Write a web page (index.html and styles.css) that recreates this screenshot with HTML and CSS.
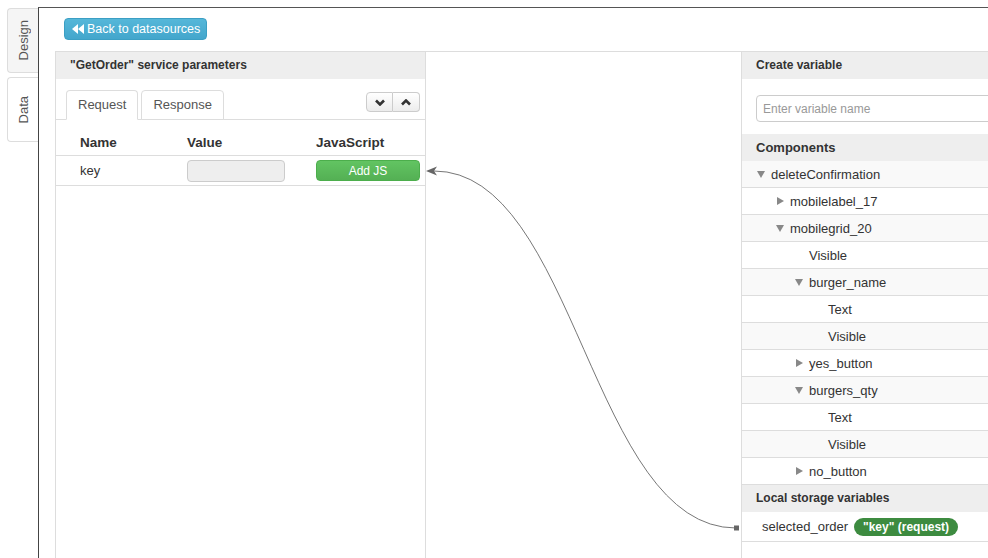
FILE: index.html
```html
<!DOCTYPE html>
<html lang="en">

<head>
    <meta charset="UTF-8">
    <title>Datasource mapping</title>
    <link rel="stylesheet" href="styles.css">
</head>

<body>
    <div class="app">
        <div class="side-tabs">
            <a href="#" class="side-tab">
                <span>Design</span>
            </a>
            <a href="#" class="side-tab active">
                <span>Data</span>
            </a>
        </div>

        <div class="workspace">
            <div class="toolbar">
                <button class="btn-back">
                    <svg width="12" height="10" viewBox="0 0 12 10">
                        <polygon points="6,0 0,5 6,10" fill="#fff" />
                        <polygon points="12,0 6,5 12,10" fill="#fff" />
                    </svg>
                    Back to datasources
                </button>
            </div>

            <div class="panels">
                <!-- service parameters -->
                <div class="panel params">
                    <div class="panel-header">"GetOrder" service parameters</div>
                    <div class="tabs-bar">
                        <a href="#" class="tab active">Request</a>
                        <a href="#" class="tab">Response</a>
                        <div class="btn-group">
                            <button class="btn-small">
                                <svg width="10" height="7" viewBox="0 0 10 7">
                                    <polyline points="1,1.5 5,5.5 9,1.5" fill="none" stroke="#333" stroke-width="2.6" />
                                </svg>
                            </button>
                            <button class="btn-small">
                                <svg width="10" height="7" viewBox="0 0 10 7">
                                    <polyline points="1,5.5 5,1.5 9,5.5" fill="none" stroke="#333" stroke-width="2.6" />
                                </svg>
                            </button>
                        </div>
                    </div>
                    <div class="param-row param-head">
                        <span>Name</span>
                        <span>Value</span>
                        <span>JavaScript</span>
                    </div>
                    <div class="param-row">
                        <span>key</span>
                        <span><input type="text" class="value-input" disabled></span>
                        <span><button class="btn-add">Add JS</button></span>
                    </div>
                </div>

                <!-- connection lines -->
                <div class="canvas">
                    <svg class="links" width="315" height="506">
                        <path d="M8 119 C 150 119, 165 476, 310 476" fill="none" stroke="#777" stroke-width="1" />
                        <polygon points="0,119 11,114.5 8,119 11,123.5" fill="#666" />
                        <rect x="308" y="473.5" width="5" height="5" fill="#666" />
                    </svg>
                </div>

                <!-- variables -->
                <div class="panel vars">
                    <div class="panel-header">Create variable</div>
                    <div class="var-form">
                        <input type="text" class="var-input" placeholder="Enter variable name">
                    </div>
                    <div class="panel-header big">Components</div>
                    <div class="tree">
                        <div class="tree-row lvl-0"><i class="caret down"></i>deleteConfirmation</div>
                        <div class="tree-row lvl-1"><i class="caret right"></i>mobilelabel_17</div>
                        <div class="tree-row lvl-1"><i class="caret down"></i>mobilegrid_20</div>
                        <div class="tree-row lvl-2"><i class="caret"></i>Visible</div>
                        <div class="tree-row lvl-2"><i class="caret down"></i>burger_name</div>
                        <div class="tree-row lvl-3"><i class="caret"></i>Text</div>
                        <div class="tree-row lvl-3"><i class="caret"></i>Visible</div>
                        <div class="tree-row lvl-2"><i class="caret right"></i>yes_button</div>
                        <div class="tree-row lvl-2"><i class="caret down"></i>burgers_qty</div>
                        <div class="tree-row lvl-3"><i class="caret"></i>Text</div>
                        <div class="tree-row lvl-3"><i class="caret"></i>Visible</div>
                        <div class="tree-row lvl-2"><i class="caret right"></i>no_button</div>
                    </div>
                    <div class="panel-header">Local storage variables</div>
                    <div class="storage-row">
                        <span>selected_order</span>
                        <span class="badge">"key" (request)</span>
                    </div>
                </div>
            </div>
        </div>
    </div>
</body>

</html>
```

FILE: styles.css
```css
/* General reset */

* {
    margin: 0;
    padding: 0;
    box-sizing: border-box;
}

body {
    font-family: "Liberation Sans", Arial, sans-serif;
    font-size: 13px;
    color: #333;
    background-color: #fff;
    overflow: hidden;
}

.app {
    display: flex;
    height: 558px;
}

/* vertical tabs on the left */

.side-tabs {
    width: 38px;
    flex: 0 0 38px;
    padding-top: 8px;
    padding-left: 7px;
}

.side-tab {
    display: flex;
    align-items: center;
    justify-content: center;
    width: 31px;
    height: 65px;
    margin-bottom: 4px;
    border: 1px solid #ddd;
    border-right: none;
    border-radius: 4px 0 0 4px;
    background-color: #f5f5f5;
    color: #555;
    font-size: 13px;
    text-decoration: none;
}

.side-tab.active {
    background-color: #fff;
}

.side-tab span {
    writing-mode: vertical-rl;
    transform: rotate(180deg);
}

/* main area */

.workspace {
    flex: 1;
    display: flex;
    flex-direction: column;
    margin-top: 7px;
    border-top: 1px solid #555;
    border-left: 1px solid #444;
    padding-left: 16px;
    overflow: hidden;
}

.toolbar {
    height: 43px;
    flex: 0 0 43px;
    padding: 10px 0 0 9px;
}

.btn-back {
    display: inline-flex;
    align-items: center;
    gap: 3px;
    height: 22px;
    padding: 0 6px 0 7px;
    border: 1px solid #3b9fc4;
    border-radius: 4px;
    background: linear-gradient(#55b7d9, #43a6cc);
    color: #fff;
    font-family: inherit;
    font-size: 12.5px;
    cursor: pointer;
}

.panels {
    flex: 1;
    display: flex;
    border-top: 1px solid #ddd;
}

.panel {
    display: flex;
    flex-direction: column;
}

.panel-header {
    height: 27px;
    line-height: 27px;
    padding-left: 14px;
    background-color: #eee;
    font-size: 12px;
    font-weight: bold;
    color: #333;
}

.panel-header.big {
    font-size: 13px;
}

/* service parameters panel */

.params {
    flex: 0 0 371px;
    border-left: 1px solid #ddd;
    border-right: 1px solid #ddd;
}

.tabs-bar {
    display: flex;
    height: 41px;
    padding: 11px 4px 0 10px;
    border-bottom: 1px solid #ddd;
}

.tab {
    height: 30px;
    line-height: 28px;
    padding: 0 11px;
    margin-right: 3px;
    border: 1px solid #ddd;
    border-radius: 4px 4px 0 0;
    background-color: #fff;
    color: #555;
    text-decoration: none;
}

.tab.active {
    border-bottom-color: #fff;
}

.btn-group {
    display: flex;
    margin-left: auto;
    margin-top: 2px;
    margin-right: 1px;
    height: 20px;
}

.btn-small {
    width: 27px;
    height: 20px;
    display: flex;
    align-items: center;
    justify-content: center;
    border: 1px solid #ccc;
    background: linear-gradient(#fff, #ececec);
    cursor: pointer;
}

.btn-small:first-child {
    border-radius: 4px 0 0 4px;
}

.btn-small:last-child {
    border-left: none;
    border-radius: 0 4px 4px 0;
}

.param-row {
    display: grid;
    grid-template-columns: 107px 129px 104px;
    align-items: center;
    height: 30px;
    padding-left: 24px;
    border-bottom: 1px solid #ddd;
}

.param-head {
    height: 36px;
    padding-top: 9px;
    font-size: 13.5px;
    font-weight: bold;
}

.value-input {
    display: block;
    width: 98px;
    height: 22px;
    border: 1px solid #ccc;
    border-radius: 4px;
    background-color: #eee;
}

.btn-add {
    display: block;
    width: 104px;
    height: 21px;
    border: 1px solid #4cae4c;
    border-radius: 4px;
    background: linear-gradient(#62c462, #54b054);
    color: #fff;
    font-family: inherit;
    font-size: 12px;
    cursor: pointer;
}

/* middle canvas with the links */

.canvas {
    flex: 0 0 315px;
    position: relative;
}

.links {
    position: absolute;
    left: 0;
    top: 0;
    overflow: visible;
}

/* variables panel */

.vars {
    flex: 0 0 300px;
    border-left: 1px solid #ddd;
}

.var-form {
    padding: 16px 0 12px 14px;
}

.var-input {
    display: block;
    width: 280px;
    height: 27px;
    padding-left: 6px;
    border: 1px solid #ccc;
    border-radius: 4px;
    font-family: inherit;
    font-size: 12px;
}

.var-input::placeholder {
    color: #999;
}

.tree-row {
    display: flex;
    align-items: center;
    height: 27px;
    border-bottom: 1px solid #ddd;
    font-size: 13px;
}

.tree-row:nth-child(odd) {
    background-color: #f9f9f9;
}

.lvl-0 { padding-left: 15px; }
.lvl-1 { padding-left: 34px; }
.lvl-2 { padding-left: 53px; }
.lvl-3 { padding-left: 72px; }

.caret {
    display: inline-block;
    width: 14px;
    height: 8px;
    position: relative;
}

.caret.down::before,
.caret.right::before {
    content: "";
    position: absolute;
    left: 0;
    top: 0;
    width: 0;
    height: 0;
}

.caret.down::before {
    top: 1px;
    border-left: 4px solid transparent;
    border-right: 4px solid transparent;
    border-top: 7px solid #888;
}

.caret.right::before {
    left: 1px;
    border-top: 4px solid transparent;
    border-bottom: 4px solid transparent;
    border-left: 7px solid #888;
}

.storage-row {
    display: flex;
    align-items: center;
    gap: 6px;
    height: 30px;
    padding-left: 20px;
    border-bottom: 1px solid #ddd;
}

.badge {
    height: 18px;
    line-height: 18px;
    padding: 0 9px;
    border-radius: 9px;
    background-color: #3d8b40;
    color: #fff;
    font-size: 12px;
    font-weight: bold;
}
```
